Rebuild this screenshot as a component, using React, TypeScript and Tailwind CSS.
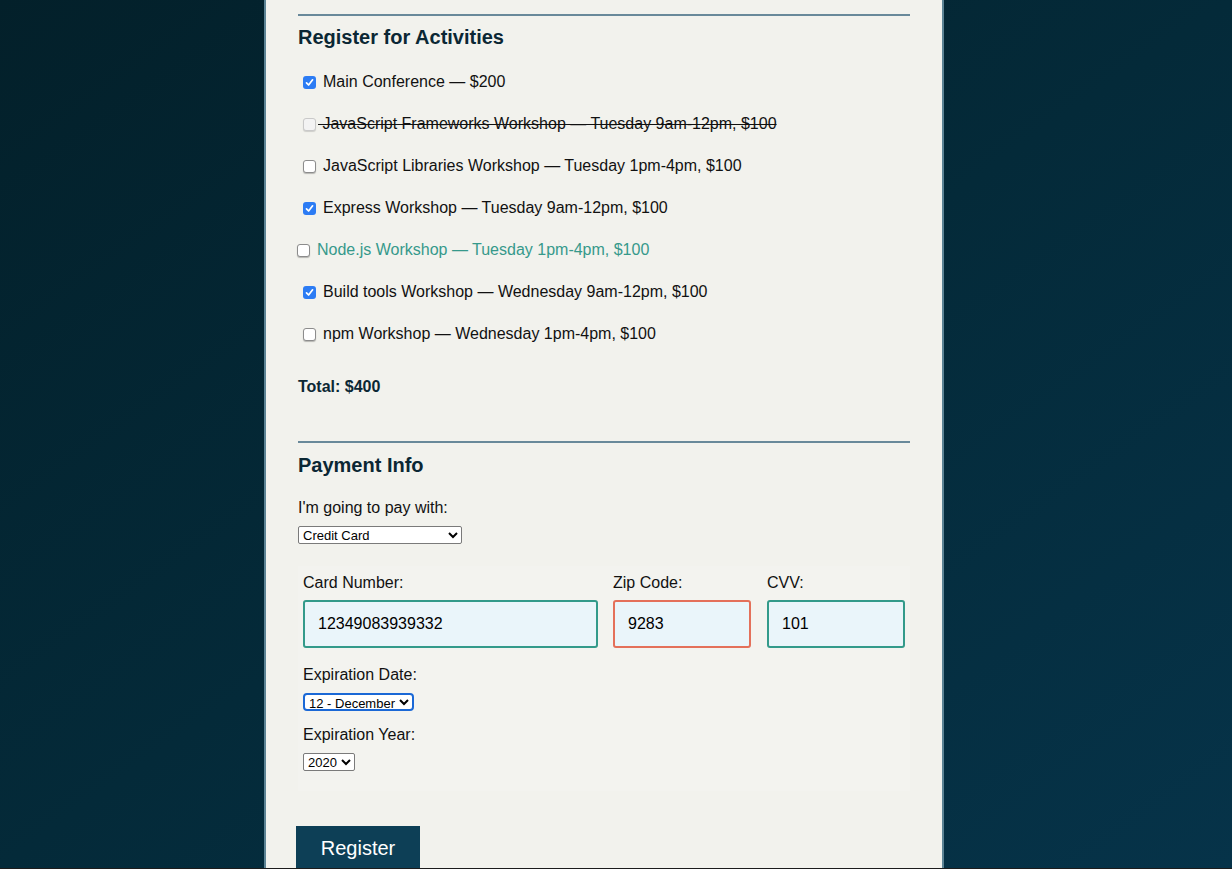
import { useState } from "react";

interface Activity {
  label: string;
  checked: boolean;
  disabled?: boolean;
  focused?: boolean;
}

const activities: Activity[] = [
  { label: "Main Conference — $200", checked: true },
  { label: "JavaScript Frameworks Workshop — Tuesday 9am-12pm, $100", checked: false, disabled: true },
  { label: "JavaScript Libraries Workshop — Tuesday 1pm-4pm, $100", checked: false },
  { label: "Express Workshop — Tuesday 9am-12pm, $100", checked: true },
  { label: "Node.js Workshop — Tuesday 1pm-4pm, $100", checked: false, focused: true },
  { label: "Build tools Workshop — Wednesday 9am-12pm, $100", checked: true },
  { label: "npm Workshop — Wednesday 1pm-4pm, $100", checked: false },
];

function Box({ checked, disabled }: { checked: boolean; disabled?: boolean }) {
  if (checked) {
    return (
      <span className="flex h-[13px] w-[13px] shrink-0 items-center justify-center rounded-[3px] bg-[#2c7cf4]">
        <svg width="9" height="9" viewBox="0 0 9 9" fill="none">
          <path d="M1.5 4.8 L3.6 7 L7.6 1.8" stroke="white" strokeWidth="1.7" strokeLinecap="round" strokeLinejoin="round" />
        </svg>
      </span>
    );
  }
  return (
    <span
      className={
        disabled
          ? "h-[13px] w-[13px] shrink-0 rounded-[3px] border border-[#c9c9c9] bg-[#f3f3f3] shadow-[0_1px_1px_rgba(0,0,0,0.15)]"
          : "h-[13px] w-[13px] shrink-0 rounded-[3px] border border-[#8c8c8c] bg-white shadow-[0_1px_1px_rgba(0,0,0,0.25)]"
      }
    />
  );
}

function App() {
  const [items] = useState(activities);

  return (
    <div
      className="flex h-[869px] justify-center overflow-hidden border-b border-[#1c1c1c] bg-gradient-to-br from-[#03202a] via-[#042a39] to-[#063349] pr-[24px] text-[16px] text-[#111]"
      style={{ fontFamily: '"Liberation Sans", Arial, sans-serif' }}
    >
      <div className="w-[680px] shrink-0 border-x-2 border-[#5d8495] bg-[#f2f2ed] px-8 pt-[14px]">
        <div className="border-t-2 border-[#69899a]" />
        <h2 className="mt-[9px] text-[20px] leading-[24px] font-bold text-[#0b2734]">Register for Activities</h2>

        <div className="mt-[12px] flex flex-col">
          {items.map((a) => (
            <label key={a.label} className={a.focused ? "-ml-[1px] flex h-[42px] items-center" : "flex h-[42px] items-center pl-[5px]"}>
              <Box checked={a.checked} disabled={a.disabled} />
              {a.disabled ? (
                <span className="ml-[2px] leading-[20px] line-through">{"\u00a0" + a.label}</span>
              ) : (
                <span className={a.focused ? "ml-[7px] leading-[20px] text-[#36998b]" : "ml-[7px] leading-[20px]"}>{a.label}</span>
              )}
            </label>
          ))}
        </div>

        <p className="mt-[22px] leading-[20px] font-bold text-[#0b2734]">Total: $400</p>

        <div className="mt-[44px] border-t-2 border-[#69899a]" />
        <h2 className="mt-[10px] text-[20px] leading-[24px] font-bold text-[#0b2734]">Payment Info</h2>

        <p className="mt-[21px] leading-[20px]">I'm going to pay with:</p>
        <select
          defaultValue="credit-card"
          className="mt-[8px] block h-[18px] w-[164px] rounded-[2px] border border-[#7a7a7a] bg-white py-0 pl-0 text-[13px] leading-none text-black"
        >
          <option value="select">Select Payment Method</option>
          <option value="credit-card">Credit Card</option>
          <option value="paypal">PayPal</option>
          <option value="bitcoin">Bitcoin</option>
        </select>

        <div className="mt-[22px] bg-[#f3f3ef] px-[5px] pt-[7px] pb-[20px]">
          <div className="flex gap-[15px]">
            <div className="flex w-[295px] flex-col">
              <span className="leading-[20px]">Card Number:</span>
              <input
                defaultValue="12349083939332"
                className="mt-[7px] h-[48px] rounded-[3px] border-2 border-[#339a8a] bg-[#eaf5fa] pl-[13px] text-[16px] text-black outline-none"
              />
            </div>
            <div className="flex w-[138px] flex-col">
              <span className="leading-[20px]">Zip Code:</span>
              <input
                defaultValue="9283"
                className="mt-[7px] h-[48px] rounded-[3px] border-2 border-[#e4705a] bg-[#eaf5fa] pl-[13px] text-[16px] text-black outline-none"
              />
            </div>
            <div className="ml-[1px] flex w-[138px] flex-col">
              <span className="leading-[20px]">CVV:</span>
              <input
                defaultValue="101"
                className="mt-[7px] h-[48px] rounded-[3px] border-2 border-[#339a8a] bg-[#eaf5fa] pl-[13px] text-[16px] text-black outline-none"
              />
            </div>
          </div>

          <p className="mt-[17px] leading-[20px]">Expiration Date:</p>
          <select
            defaultValue="12"
            className="mt-[8px] block h-[18px] w-[111px] rounded-[4px] border-2 border-[#1a68d6] bg-white py-0 pl-0 text-[13px] leading-none text-black outline-none"
          >
            <option value="1">1 - January</option>
            <option value="12">12 - December</option>
          </select>

          <p className="mt-[14px] leading-[20px]">Expiration Year:</p>
          <select
            defaultValue="2020"
            className="mt-[8px] block h-[18px] w-[52px] rounded-[2px] border border-[#7a7a7a] bg-white py-0 pl-0 text-[13px] leading-none text-black"
          >
            <option value="2020">2020</option>
            <option value="2021">2021</option>
          </select>
        </div>

        <button className="mt-[35px] -ml-[2px] h-[44px] w-[124px] bg-[#0d3f56] text-[20px] leading-[24px] text-white">Register</button>
      </div>
    </div>
  );
}

export default App;
